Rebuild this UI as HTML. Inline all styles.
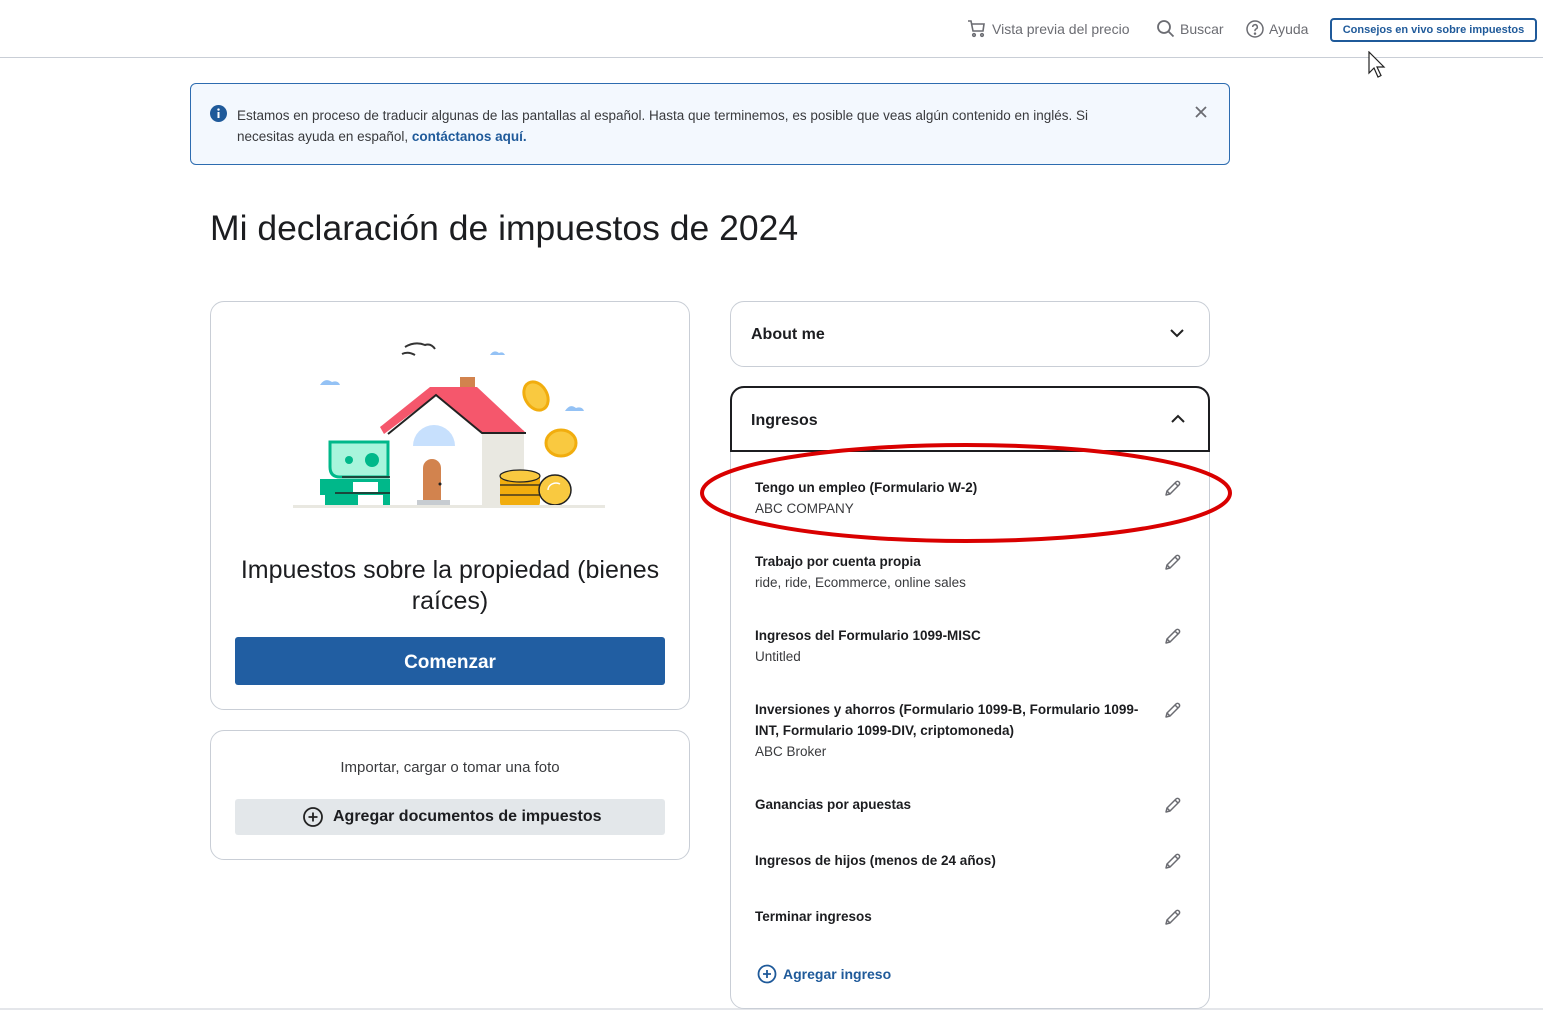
<!DOCTYPE html>
<html><head><meta charset="utf-8"><style>
*{box-sizing:border-box;margin:0;padding:0}
html,body{width:1543px;height:1010px;overflow:hidden}
body{position:relative;background:#fff;font-family:"Liberation Sans",sans-serif;color:#393a3d}
.a{position:absolute}
.nav{font-size:14px;color:#6b6c72;top:19px;height:20px;line-height:20px}
.card{position:absolute;border:1px solid #c9ced6;border-radius:14px;background:#fff}
.it{position:absolute;left:24px;font-size:14px;line-height:21px}
.it b{font-weight:bold;color:#1c1d20;font-size:13.5px}
.it span{color:#393a3d;font-size:13.5px}
</style></head><body>
<div class="a" style="left:0;top:57px;width:1543px;height:1px;background:#c9ced6"></div>
<div class="a" style="left:0;top:1008px;width:1543px;height:2px;background:#e4e6ea"></div>

<svg class="a" style="left:967px;top:19px" width="20" height="20" viewBox="0 0 20 20" fill="none" stroke="#6b6c72" stroke-width="1.6"><path d="M1 2h3l2 10h10l1-7H5"/><circle cx="7" cy="16" r="1.3"/><circle cx="15" cy="16" r="1.3"/></svg>
<div class="a nav" style="left:992px">Vista previa del precio</div>
<svg class="a" style="left:1156px;top:19px" width="20" height="20" viewBox="0 0 20 20" fill="none" stroke="#6b6c72" stroke-width="1.8"><circle cx="8" cy="8" r="6"/><path d="M12.5 12.5l5 5"/></svg>
<div class="a nav" style="left:1180px">Buscar</div>
<svg class="a" style="left:1245px;top:19px" width="20" height="20" viewBox="0 0 20 20" fill="none" stroke="#6b6c72" stroke-width="1.5"><circle cx="10" cy="10" r="8"/><path d="M7.7 8a2.3 2.3 0 1 1 3.2 2.1c-.6.3-.9.8-.9 1.4v.6"/><circle cx="10" cy="14.6" r=".5" fill="#6b6c72"/></svg>
<div class="a nav" style="left:1269px">Ayuda</div>
<div class="a" style="left:1330px;top:18px;width:207px;height:24px;border:2px solid #1f5a9a;border-radius:4px;color:#1f5a9a;font-size:11px;font-weight:bold;text-align:center;line-height:20px">Consejos en vivo sobre impuestos</div>
<svg class="a" style="left:1367px;top:51px" width="22" height="28" viewBox="0 0 22 28"><path d="M2 1v21l5-5 4 9 3-1.5-4-8.5h7z" fill="#fff" stroke="#222" stroke-width="1.2"/></svg>

<div class="a" style="left:190px;top:83px;width:1040px;height:82px;border:1px solid #2d6cb0;border-radius:6px;background:#f3f8fe"></div>
<svg class="a" style="left:210px;top:105px" width="17" height="17" viewBox="0 0 17 17"><circle cx="8.5" cy="8.5" r="8.5" fill="#1f5a9a"/><rect x="7.5" y="7" width="2" height="6" fill="#fff"/><circle cx="8.5" cy="4.6" r="1.2" fill="#fff"/></svg>
<div class="a" style="left:237px;top:105px;width:905px;font-size:13.5px;line-height:21px;color:#393a3d">Estamos en proceso de traducir algunas de las pantallas al español. Hasta que terminemos, es posible que veas algún contenido en inglés. Si necesitas ayuda en español, <span style="color:#1f5a9a;font-weight:bold">contáctanos aquí.</span></div>
<svg class="a" style="left:1194px;top:105px" width="14" height="14" viewBox="0 0 14 14" stroke="#6b6c72" stroke-width="1.8"><path d="M2 2l10 10M12 2L2 12"/></svg>

<div class="a" style="left:210px;top:206px;font-size:35.5px;color:#1c1d20;line-height:44px">Mi declaración de impuestos de 2024</div>

<div class="card" style="left:210px;top:301px;width:480px;height:409px"></div>
<svg class="a" style="left:280px;top:330px" width="340" height="190" viewBox="0 0 340 190">
<path d="M40 55q5-8 12-3 6-2 8 3h14z" fill="#94c2f5"/>
<path d="M210 25q4-6 9-2 4-2 6 2h8z" fill="#94c2f5"/>
<path d="M285 81q5-8 11-3 6-2 8 3h12z" fill="#94c2f5"/>
<path d="M125 17q10-6 20-2 6-2 10 4M122 24q6-3 13 1" stroke="#333" stroke-width="2" fill="none"/>
<rect x="180" y="47" width="15" height="12" fill="#d2834e"/>
<rect x="110" y="100" width="135" height="78" fill="#fff"/>
<rect x="202" y="100" width="42" height="78" fill="#e9e8e1"/>
<path d="M100 97l50-40h47l48 45h-43l-46-37-52 39z" fill="#f5576c"/>
<path d="M108 104l48-39 46 38h44" stroke="#222" stroke-width="2" fill="none"/>
<path d="M133 116a21 21 0 0 1 42 0z" fill="#c7e0fd"/>
<path d="M143 170v-32a9 9 0 0 1 18 0v32z" fill="#d2834e"/>
<circle cx="160" cy="154" r="1.5" fill="#222"/>
<rect x="137" y="170" width="33" height="8" fill="#c7ccd1"/>
<path d="M50 112h58v35H60q-10 0-10-10z" fill="#a8f5dc" stroke="#00b88a" stroke-width="3"/>
<circle cx="69" cy="130" r="4" fill="#00b88a"/><circle cx="92" cy="130" r="7" fill="#00b88a"/>
<rect x="40" y="149" width="70" height="16" fill="#00b88a"/><rect x="73" y="152" width="25" height="10" fill="#fff"/>
<rect x="45" y="165" width="65" height="12" fill="#00b88a"/><rect x="78" y="165" width="25" height="12" fill="#fff"/>
<path d="M62 147h48M55 163h55" stroke="#222" stroke-width="1.5"/>
<rect x="220" y="142" width="40" height="36" rx="6" fill="#f1ad0e"/>
<ellipse cx="240" cy="146" rx="20" ry="6" fill="#f9c940" stroke="#222" stroke-width="1.2"/>
<path d="M220 155h40M220 165h40" stroke="#222" stroke-width="1.2"/>
<ellipse cx="275" cy="160" rx="16" ry="15" fill="#f9c940" stroke="#222" stroke-width="1.5"/>
<path d="M268 160a8 7 0 0 1 12-6" stroke="#fff" stroke-width="1.5" fill="none"/>
<ellipse cx="256" cy="66" rx="11" ry="15" transform="rotate(-30 256 66)" fill="#f9c940" stroke="#f1ad0e" stroke-width="3"/>
<ellipse cx="281" cy="113" rx="15" ry="13" fill="#f9c940" stroke="#f1ad0e" stroke-width="3"/>
<rect x="13" y="175" width="312" height="3" fill="#e9e8e1"/>
</svg>
<div class="a" style="left:211px;top:555px;width:478px;text-align:center;font-size:25px;line-height:31px;color:#1c1d20">Impuestos sobre la propiedad (bienes<br>raíces)</div>
<div class="a" style="left:235px;top:637px;width:430px;height:48px;background:#215ea2;border-radius:3px;color:#fff;font-weight:bold;font-size:19px;text-align:center;line-height:52px">Comenzar</div>

<div class="card" style="left:210px;top:730px;width:480px;height:130px"></div>
<div class="a" style="left:210px;top:759px;width:480px;text-align:center;font-size:15px;color:#393a3d">Importar, cargar o tomar una foto</div>
<div class="a" style="left:235px;top:799px;width:430px;height:36px;background:#e3e7ea;border-radius:3px"></div>
<svg class="a" style="left:302px;top:806px" width="22" height="22" viewBox="0 0 22 22" fill="none" stroke="#222" stroke-width="1.8"><circle cx="11" cy="11" r="9"/><path d="M11 6.5v9M6.5 11h9"/></svg>
<div class="a" style="left:333px;top:808px;font-size:16px;font-weight:bold;color:#1c1d20">Agregar documentos de impuestos</div>

<div class="card" style="left:730px;top:301px;width:480px;height:66px"></div>
<div class="a" style="left:751px;top:326px;font-size:16px;font-weight:bold;color:#1c1d20">About me</div>
<svg class="a" style="left:1169px;top:327px" width="16" height="12" viewBox="0 0 16 12" fill="none" stroke="#222" stroke-width="2"><path d="M2 3l6 6 6-6"/></svg>

<div class="card" style="left:730px;top:386px;width:480px;height:623px;border-radius:14px 14px 14px 14px">
<div class="a" style="left:-1px;top:-1px;width:480px;height:66px;border:2px solid #1c1d20;border-radius:14px 14px 0 0;background:#fff"></div>
<div class="a" style="left:20px;top:25px;font-size:16px;font-weight:bold;color:#1c1d20">Ingresos</div>
<svg class="a" style="left:439px;top:26px" width="16" height="12" viewBox="0 0 16 12" fill="none" stroke="#222" stroke-width="2"><path d="M2 9l6-6 6 6"/></svg>
<div class="it" style="top:90px"><b>Tengo un empleo (Formulario W-2)</b><br><span>ABC COMPANY</span></div>
<div class="it" style="top:164px"><b>Trabajo por cuenta propia</b><br><span>ride, ride, Ecommerce, online sales</span></div>
<div class="it" style="top:238px"><b>Ingresos del Formulario 1099-MISC</b><br><span>Untitled</span></div>
<div class="it" style="top:312px;width:400px"><b>Inversiones y ahorros (Formulario 1099-B, Formulario 1099-INT, Formulario 1099-DIV, criptomoneda)</b><br><span>ABC Broker</span></div>
<div class="it" style="top:407px"><b>Ganancias por apuestas</b></div>
<div class="it" style="top:463px"><b>Ingresos de hijos (menos de 24 años)</b></div>
<div class="it" style="top:519px"><b>Terminar ingresos</b></div>
<svg class="a" style="left:26px;top:577px" width="20" height="20" viewBox="0 0 20 20" fill="none" stroke="#1f5a9a" stroke-width="1.8"><circle cx="10" cy="10" r="8.5"/><path d="M10 6v8M6 10h8"/></svg>
<div class="a" style="left:52px;top:579px;font-size:14px;font-weight:bold;color:#1f5a9a">Agregar ingreso</div>
</div>
<svg width="0" height="0" style="position:absolute"><defs><symbol id="pn" viewBox="0 0 20 20"><path d="M3 17l1-4 9-9a2 2 0 0 1 3 3l-9 9z M12 5l3 3M4 13l3 3" fill="none" stroke="#6b6c72" stroke-width="1.5" stroke-linejoin="round"/></symbol></defs></svg>
<svg class="a" style="left:1163px;top:478px" width="20" height="20"><use href="#pn"/></svg>
<svg class="a" style="left:1163px;top:552px" width="20" height="20"><use href="#pn"/></svg>
<svg class="a" style="left:1163px;top:626px" width="20" height="20"><use href="#pn"/></svg>
<svg class="a" style="left:1163px;top:700px" width="20" height="20"><use href="#pn"/></svg>
<svg class="a" style="left:1163px;top:795px" width="20" height="20"><use href="#pn"/></svg>
<svg class="a" style="left:1163px;top:851px" width="20" height="20"><use href="#pn"/></svg>
<svg class="a" style="left:1163px;top:907px" width="20" height="20"><use href="#pn"/></svg>

<svg class="a" style="left:690px;top:435px" width="560" height="120"><ellipse cx="276" cy="58" rx="264" ry="48" fill="none" stroke="#d90000" stroke-width="4"/></svg>
</body></html>
